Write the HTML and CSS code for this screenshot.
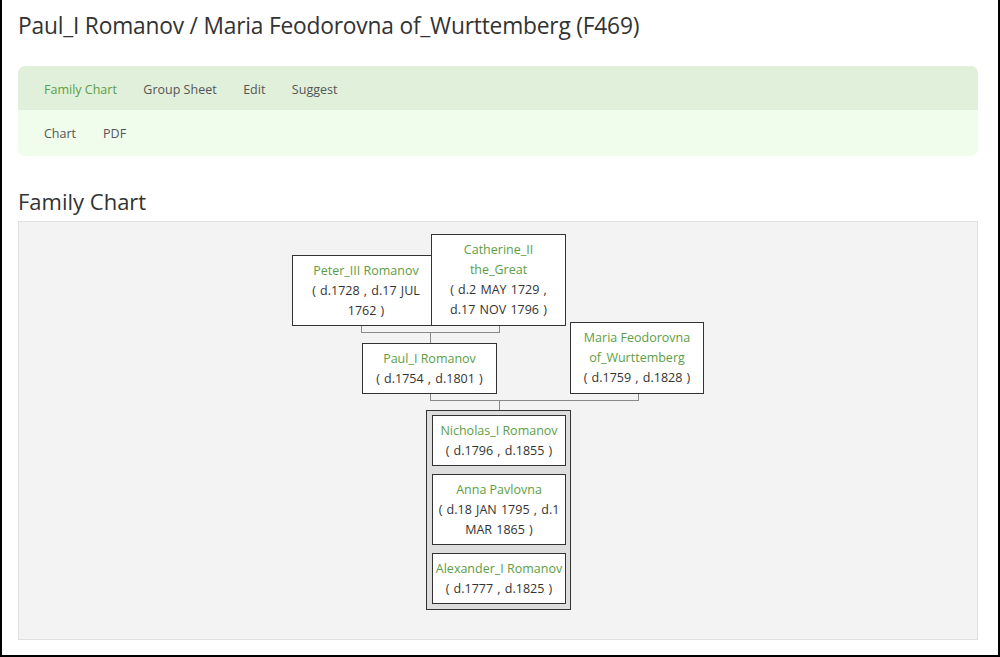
FILE: index.html
```html
<!DOCTYPE html>
<html>
<head>
<meta charset="utf-8">
<link rel="stylesheet" href="styles.css">
</head>
<body>
<div class="frame">
  <h1 class="title">Paul_I Romanov / Maria Feodorovna of_Wurttemberg (F469)</h1>
  <nav class="nav">
    <div class="nav-main">
      <a class="nav-link active">Family Chart</a>
      <a class="nav-link">Group Sheet</a>
      <a class="nav-link">Edit</a>
      <a class="nav-link">Suggest</a>
    </div>
    <div class="nav-sub">
      <a class="nav-link">Chart</a>
      <a class="nav-link">PDF</a>
    </div>
  </nav>
  <h2 class="section-title">Family Chart</h2>
  <div class="chart">
    <div class="canvas">
      <svg class="lines" width="960" height="418" viewBox="0 0 960 418">
        <g stroke="#888" stroke-width="1" fill="none" shape-rendering="crispEdges">
          <path d="M342.5 104 V110.5 H480.5 V104"/>
          <path d="M411.5 110.5 V122"/>
          <path d="M411.5 172 V178.5 H619.5 V172"/>
          <path d="M480.5 178.5 V189"/>
        </g>
      </svg>
      <div class="node n-peter">
        <span class="name">Peter_III Romanov</span>
        <span class="dates">( d.1728 , d.17 JUL 1762 )</span>
      </div>
      <div class="node n-cath">
        <span class="name">Catherine_II the_Great</span>
        <span class="dates">( d.2 MAY 1729 , d.17 NOV 1796 )</span>
      </div>
      <div class="node n-paul">
        <span class="name">Paul_I Romanov</span>
        <span class="dates">( d.1754 , d.1801 )</span>
      </div>
      <div class="node n-maria">
        <span class="name">Maria Feodorovna of_Wurttemberg</span>
        <span class="dates">( d.1759 , d.1828 )</span>
      </div>
      <div class="children">
        <div class="node child">
          <span class="name">Nicholas_I Romanov</span>
          <span class="dates">( d.1796 , d.1855 )</span>
        </div>
        <div class="node child">
          <span class="name">Anna Pavlovna</span>
          <span class="dates">( d.18 JAN 1795 , d.1 MAR 1865 )</span>
        </div>
        <div class="node child">
          <span class="name">Alexander_I Romanov</span>
          <span class="dates">( d.1777 , d.1825 )</span>
        </div>
      </div>
    </div>
  </div>
</div>
</body>
</html>
```

FILE: styles.css
```css
* { box-sizing: border-box; }
html, body { margin: 0; padding: 0; background: #fff; }
body {
  font-family: "Open Sans", "Noto Sans", "Liberation Sans", sans-serif;
  color: #333;
}
.frame {
  width: 1000px;
  height: 657px;
  border-left: 2px solid #000;
  border-right: 2px solid #000;
  border-bottom: 2px solid #000;
  padding: 0 20px 0 16px;
  overflow: hidden;
}
.title {
  margin: 0;
  padding-top: 10px;
  height: 66px;
  font-size: 22.75px;
  font-weight: 400;
  line-height: 32px;
  color: #333;
  letter-spacing: -0.2px;
}
.nav {
  border-radius: 7px;
  overflow: hidden;
}
.nav-main {
  background: #e0f0da;
  height: 44px;
  display: flex;
  align-items: center;
  padding-left: 26px;
  padding-top: 3px;
  gap: 26.5px;
}
.nav-sub {
  background: #f0fcec;
  height: 46px;
  display: flex;
  align-items: center;
  padding-left: 26px;
  padding-top: 2px;
  gap: 27px;
}
.nav-link {
  font-size: 12.5px;
  color: #555;
  text-decoration: none;
  line-height: 18px;
}
.nav-link.active { color: #5d9e45; }
.section-title {
  margin: 0;
  padding-top: 28px;
  height: 65px;
  font-size: 22px;
  font-weight: 400;
  line-height: 34px;
  color: #333;
}
.chart {
  height: 419px;
  background: #f3f3f3;
  border: 1px solid #e0e0e0;
}
.canvas {
  position: relative;
  width: 960px;
  height: 418px;
}
.lines { position: absolute; left: 0; top: 0; }
.node {
  position: absolute;
  background: #fff;
  border: 1px solid #333;
  display: flex;
  flex-direction: column;
  align-items: center;
  justify-content: center;
  text-align: center;
  font-size: 12.5px;
  line-height: 20px;
  word-spacing: 1px;
  padding: 0 6px;
}
.node span { display: block; }
.name { color: #5d9e45; word-spacing: 0; }
.dates { color: #333; }
.n-peter { left: 273px; top: 33px; width: 148px; height: 71px; }
.n-cath { left: 412px; top: 12px; width: 135px; height: 92px; padding: 0 11px; }
.n-paul { left: 343px; top: 121px; width: 135px; height: 51px; }
.n-maria { left: 551px; top: 100px; width: 134px; height: 72px; padding: 0 10px; }
.children {
  position: absolute;
  left: 407px;
  top: 188px;
  width: 145px;
  height: 200px;
  background: #dedede;
  border: 1px solid #333;
  padding: 4px 5px;
  display: flex;
  flex-direction: column;
  gap: 8px;
}
.node.child {
  position: static;
  width: 134px;
  padding: 0 3px;
}
.child .name { white-space: nowrap; }
.child:nth-child(1) { height: 51px; }
.child:nth-child(2) { height: 71px; }
.child:nth-child(3) { height: 51px; }
```
